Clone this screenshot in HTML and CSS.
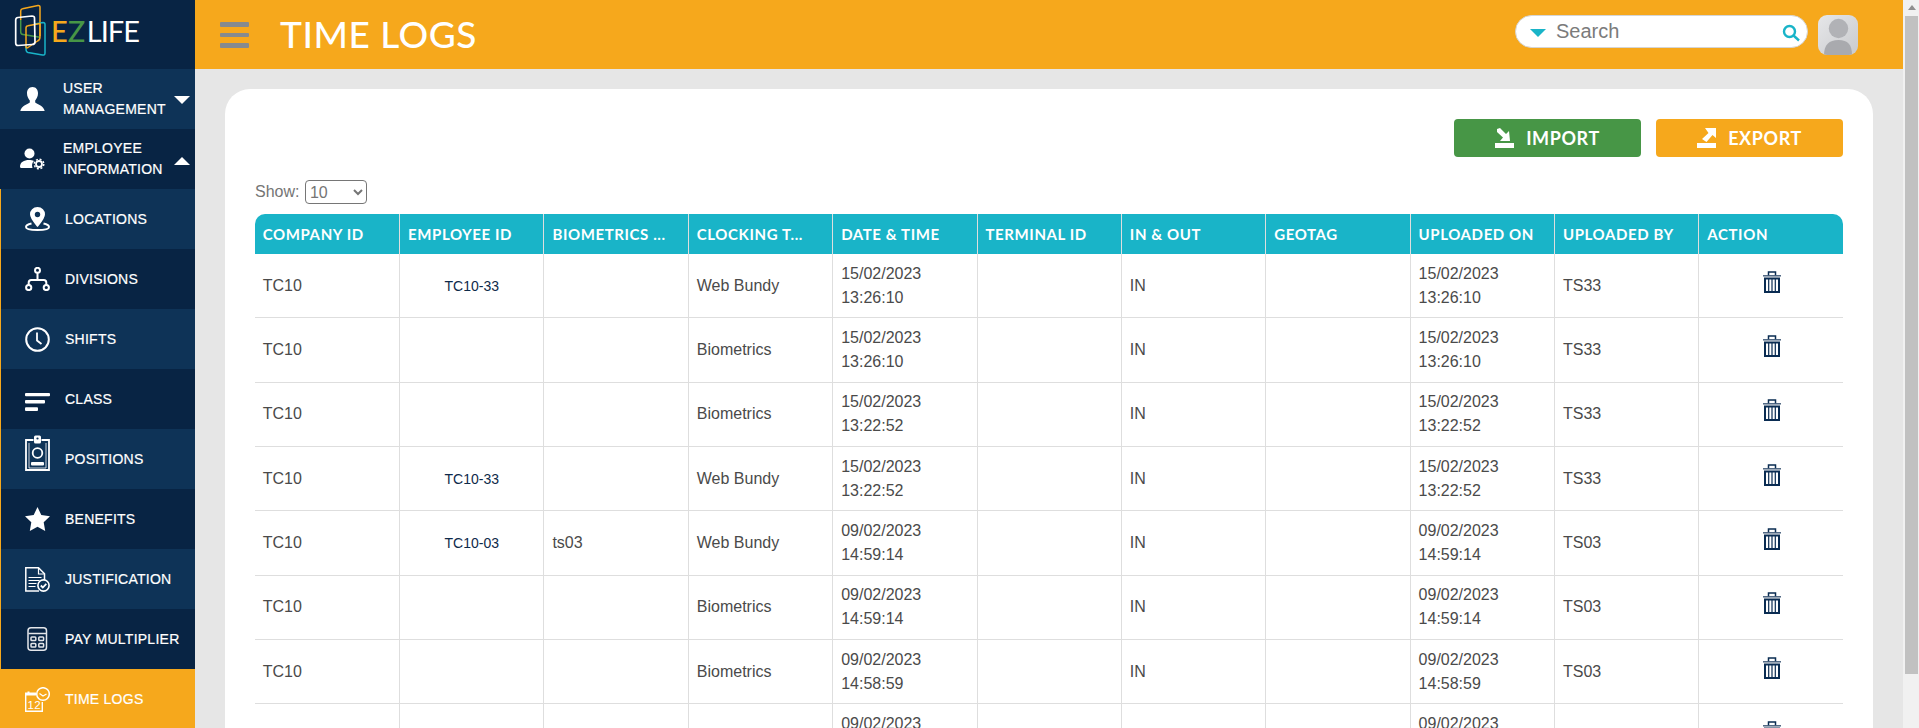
FILE: index.html
```html
<!DOCTYPE html>
<html lang="en">
<head>
<meta charset="utf-8">
<title>Time Logs</title>
<link rel="stylesheet" href="styles.css">
</head>
<body>
<div class="app">
  <aside class="sidebar">
    <div class="brand">
      <svg class="brand-mark" width="50" height="69" viewBox="0 0 50 69" fill="none" stroke-width="1.500" stroke-linejoin="round">
        <path d="M20.700 20V11Q20.700 9 22.500 8.700L38 5.500Q40 5.300 40 7.300V36" stroke="#f6a81c"/>
        <path d="M20.700 20V32Q20.700 34.300 23 34.600L40 37.300" stroke="#479646"/>
        <path d="M35 24L43 22.500Q45 22.500 45 24.500V53Q45 55.500 42.500 55L28 52.500Q26 52 26 49V46" stroke="#19b4c8"/>
        <path d="M26 47V28Q26 26 28 25.700L40 23.500V37Q40 40 37.500 41L28 47.500Q26 48.500 26 47Z" stroke="#f6a81c"/>
        <path d="M18 17.500L32 16Q34.500 16 34.500 18L35 42Q35 44.500 32 44.500L18 45.500Q15.700 45.500 15.700 43V20Q15.700 17.800 18 17.500Z" stroke="#fff" stroke-width="1.700"/>
      </svg>
      <div class="brand-name"><span class="brand-e">E</span><span class="brand-z">Z</span><span class="brand-life">LIFE</span></div>
    </div>
    <nav class="nav">
      <a class="nav-top nav-light">
        <svg class="top-icon" width="25" height="24" viewBox="0 0 25 24" fill="#fff"><path d="M12.500 0C8.800 0 7 3 7 6.200c0 3 1.300 5.600 2.800 7.200v2.200C7 17.500 1.500 19 .3 24h24.400c-1.200-5-6.700-6.500-9.500-8.400v-2.200C16.700 11.800 18 9.200 18 6.200 18 3 16.200 0 12.500 0z"/></svg>
        <span class="top-label">USER MANAGEMENT</span>
        <span class="caret-down"></span>
      </a>
      <a class="nav-top nav-dark">
        <svg class="top-icon" width="25" height="22" viewBox="0 0 25 22" fill="#fff"><circle cx="9.500" cy="5.500" r="5"/><path d="M0 19c0-5 4-7 9-7 2 0 3.500.3 5 1-1.800 1.500-2.500 4-1.500 7H2c-1.300 0-2-.5-2-1z"/><g fill="none" stroke="#fff"><circle cx="19" cy="16" r="3" stroke-width="1.800"/><circle cx="19" cy="16" r="4.800" stroke-width="1.400" stroke-dasharray="2 1.770"/></g></svg>
        <span class="top-label">EMPLOYEE INFORMATION</span>
        <span class="caret-up"></span>
      </a>
      <a class="nav-item nav-light">
        <svg class="item-icon" width="25" height="24" viewBox="0 0 25 24" fill="none" stroke="#fff" stroke-width="2"><path d="M12.500 1C8.500 1 6 4 6 7.300c0 3.700 3.500 7.500 6.500 11.200 3-3.700 6.500-7.500 6.500-11.200C19 4 16.500 1 12.500 1z" fill="#fff"/><circle cx="12.500" cy="7.500" r="2.700" fill="#0e3357" stroke="none"/><path d="M6.500 16.500C3 17.300 1 18.500 1 20c0 2 5 3 11.500 3S24 22 24 20c0-1.500-2-2.700-5.500-3.500"/></svg>
        <span>LOCATIONS</span>
      </a>
      <a class="nav-item nav-dark">
        <svg class="item-icon" width="25" height="24" viewBox="0 0 25 24" fill="none" stroke="#fff" stroke-width="2"><circle cx="12.500" cy="3.300" r="2.500"/><circle cx="3.700" cy="20.500" r="2.600"/><circle cx="21.300" cy="20.500" r="2.600"/><path d="M12.500 6v7M3.700 18v-2.500q0-2.500 2.500-2.500h12.600q2.500 0 2.500 2.500V18"/></svg>
        <span>DIVISIONS</span>
      </a>
      <a class="nav-item nav-light">
        <svg class="item-icon" width="25" height="25" viewBox="0 0 25 25" fill="none" stroke="#fff" stroke-width="2"><circle cx="12.500" cy="12.500" r="11.300"/><path d="M12 5.500v8l4.500 3.500" stroke-width="1.800"/></svg>
        <span>SHIFTS</span>
      </a>
      <a class="nav-item nav-dark">
        <svg class="item-icon icon-class" width="25" height="18" viewBox="0 0 25 18" fill="#fff"><rect width="25" height="3.200" rx="1"/><rect y="7" width="20" height="3.400" rx="1"/><rect y="14.200" width="13" height="3.800" rx="1"/></svg>
        <span>CLASS</span>
      </a>
      <a class="nav-item nav-light">
        <svg class="item-icon icon-badge" width="25" height="36" viewBox="0 0 25 36" fill="none" stroke="#fff"><path d="M8.500 5H1v30h23V5h-7.500" stroke-width="1.800"/><rect x="9" y=".5" width="7" height="8" rx="1.500" fill="#fff" stroke="none"/><circle cx="12.500" cy="3.500" r="1.100" fill="#0e3357" stroke="none"/><path d="M4 8v25h17V8" stroke-width=".8"/><circle cx="12.500" cy="18" r="4.800" stroke-width="1.800"/><rect x="6" y="27" width="13" height="3.500" rx="1" fill="#fff" stroke="none"/></svg>
        <span>POSITIONS</span>
      </a>
      <a class="nav-item nav-dark">
        <svg class="item-icon" width="25" height="24" viewBox="0 0 25 24" fill="#fff"><path d="M12.500 0l3.800 8 8.700 1.200-6.300 6 1.500 8.800-7.700-4.200L4.800 24l1.500-8.800L0 9.200 8.700 8z"/></svg>
        <span>BENEFITS</span>
      </a>
      <a class="nav-item nav-light">
        <svg class="item-icon" width="25" height="25" viewBox="0 0 25 25" fill="none" stroke="#fff"><path d="M14 24H.8V.8h12.700l6 6V13" stroke-width="1.500"/><path d="M13.500 1v6h6" stroke-width="1.200"/><path d="M3.500 10.500h13M3.500 13.500h11M3.500 16.500h8M3.500 19.500h7" stroke-width="1.200"/><circle cx="18.500" cy="18.500" r="5.600" stroke-width="1.600"/><path d="M15.800 18.500l2 2 3.500-3.700" stroke-width="1.800"/></svg>
        <span>JUSTIFICATION</span>
      </a>
      <a class="nav-item nav-dark">
        <svg class="item-icon" width="25" height="24" viewBox="0 0 25 24" fill="none" stroke="#e4e6ea" stroke-width="1.500"><rect x="3" y=".8" width="18.500" height="22.400" rx="3"/><path d="M3.500 6.500h18"/><rect x="6" y="10" width="4.800" height="3.600" rx=".8"/><rect x="13.800" y="10" width="4.800" height="3.600" rx=".8"/><rect x="6" y="16.500" width="4.800" height="3.600" rx=".8"/><rect x="13.800" y="16.500" width="4.800" height="3.600" rx=".8"/></svg>
        <span>PAY MULTIPLIER</span>
      </a>
      <a class="nav-item nav-active">
        <svg class="item-icon" width="25" height="25" viewBox="0 0 25 25" fill="none" stroke="#fff"><path d="M0 5.500h11v3H0z" fill="#fff" stroke="none"/><rect x="2.500" y="4.500" width="2" height="3" fill="#fff" stroke="none"/><path d="M.7 6v18.300h16.600V15" stroke-width="1.400"/><text x="2.500" y="22" class="cal-day">12</text><circle cx="18" cy="7" r="6.300" fill="#f6a81c" stroke-width="1.500"/><path d="M14.500 6.500l3.500 2.500 3.500-2" stroke-width="1.300"/></svg>
        <span>TIME LOGS</span>
      </a>
    </nav>
  </aside>

  <div class="main">
    <header class="topbar">
      <div class="burger"><i></i><i></i><i></i></div>
      <h1 class="page-title">TIME LOGS</h1>
      <div class="topbar-right">
        <div class="search">
          <span class="search-caret"></span>
          <span class="search-text">Search</span>
          <svg class="search-icon" width="18" height="18" viewBox="0 0 18 18" fill="none" stroke="#19b4c8"><circle cx="7.500" cy="7.500" r="5.500" stroke-width="2.400"/><path d="M11.500 11.500l5.500 5" stroke-width="2.400"/></svg>
        </div>
        <div class="avatar">
          <svg width="40" height="40" viewBox="0 0 40 40"><circle cx="20.500" cy="13.500" r="9.700" fill="#b1b2b6"/><path d="M6 40c0-10 5-15 14.500-15S34 30 34 40z" fill="#a9aaae"/></svg>
        </div>
      </div>
    </header>

    <main class="content">
      <section class="card">
        <div class="actions">
          <button class="btn btn-import">
            <svg width="19" height="20" viewBox="0 0 19 20" fill="#fff"><rect y="15" width="19" height="5"/><path d="M2 1l3-1 6 6 3-3 1 10H5l3-3.500L2 4z"/></svg>
            IMPORT
          </button>
          <button class="btn btn-export">
            <svg width="19" height="20" viewBox="0 0 19 20" fill="#fff"><rect y="15" width="19" height="5"/><path d="M8 0h11v10l-3.500-3-6 7-4.500-3 6.500-6z"/></svg>
            EXPORT
          </button>
        </div>
        <div class="show">
          <label for="page-size">Show:</label>
          <select id="page-size" class="show-select"><option>10</option></select>
        </div>
        <table class="logs">
          <thead>
            <tr>
              <th>COMPANY ID</th><th>EMPLOYEE ID</th><th>BIOMETRICS ...</th><th>CLOCKING T...</th><th>DATE &amp; TIME</th><th>TERMINAL ID</th><th>IN &amp; OUT</th><th>GEOTAG</th><th>UPLOADED ON</th><th>UPLOADED BY</th><th>ACTION</th>
            </tr>
          </thead>
          <tbody>
            <tr><td>TC10</td><td class="emp">TC10-33</td><td></td><td>Web Bundy</td><td>15/02/2023<br>13:26:10</td><td></td><td>IN</td><td></td><td>15/02/2023<br>13:26:10</td><td>TS33</td><td class="act"><svg class="trash" width="18" height="22" viewBox="0 0 18 22"><use href="#trash"/></svg></td></tr>
            <tr><td>TC10</td><td class="emp"></td><td></td><td>Biometrics</td><td>15/02/2023<br>13:26:10</td><td></td><td>IN</td><td></td><td>15/02/2023<br>13:26:10</td><td>TS33</td><td class="act"><svg class="trash" width="18" height="22" viewBox="0 0 18 22"><use href="#trash"/></svg></td></tr>
            <tr><td>TC10</td><td class="emp"></td><td></td><td>Biometrics</td><td>15/02/2023<br>13:22:52</td><td></td><td>IN</td><td></td><td>15/02/2023<br>13:22:52</td><td>TS33</td><td class="act"><svg class="trash" width="18" height="22" viewBox="0 0 18 22"><use href="#trash"/></svg></td></tr>
            <tr><td>TC10</td><td class="emp">TC10-33</td><td></td><td>Web Bundy</td><td>15/02/2023<br>13:22:52</td><td></td><td>IN</td><td></td><td>15/02/2023<br>13:22:52</td><td>TS33</td><td class="act"><svg class="trash" width="18" height="22" viewBox="0 0 18 22"><use href="#trash"/></svg></td></tr>
            <tr><td>TC10</td><td class="emp">TC10-03</td><td>ts03</td><td>Web Bundy</td><td>09/02/2023<br>14:59:14</td><td></td><td>IN</td><td></td><td>09/02/2023<br>14:59:14</td><td>TS03</td><td class="act"><svg class="trash" width="18" height="22" viewBox="0 0 18 22"><use href="#trash"/></svg></td></tr>
            <tr><td>TC10</td><td class="emp"></td><td></td><td>Biometrics</td><td>09/02/2023<br>14:59:14</td><td></td><td>IN</td><td></td><td>09/02/2023<br>14:59:14</td><td>TS03</td><td class="act"><svg class="trash" width="18" height="22" viewBox="0 0 18 22"><use href="#trash"/></svg></td></tr>
            <tr><td>TC10</td><td class="emp"></td><td></td><td>Biometrics</td><td>09/02/2023<br>14:58:59</td><td></td><td>IN</td><td></td><td>09/02/2023<br>14:58:59</td><td>TS03</td><td class="act"><svg class="trash" width="18" height="22" viewBox="0 0 18 22"><use href="#trash"/></svg></td></tr>
            <tr><td>TC10</td><td class="emp">TC10-03</td><td></td><td>Web Bundy</td><td>09/02/2023<br>14:58:59</td><td></td><td>IN</td><td></td><td>09/02/2023<br>14:58:59</td><td>TS03</td><td class="act"><svg class="trash" width="18" height="22" viewBox="0 0 18 22"><use href="#trash"/></svg></td></tr>
          </tbody>
        </table>
      </section>
    </main>
  </div>

  <div class="scrollbar">
    <div class="scroll-up"></div>
    <div class="scroll-thumb"></div>
  </div>
</div>

<svg class="defs" width="0" height="0">
  <defs>
    <symbol id="trash" viewBox="0 0 18 22">
      <path d="M5.500 4.300V1h7v3.300" fill="none" stroke="#0a2c52" stroke-width="1.500"/>
      <rect y="4.300" width="18" height="1.100" fill="#0a2c52"/>
      <rect x="2" y="7.500" width="14" height="13.500" fill="none" stroke="#0a2c52" stroke-width="2"/>
      <path d="M5.700 8v12.500M9 8v12.500M12.300 8v12.500" stroke="#0a2c52" stroke-width="1.200"/>
    </symbol>
  </defs>
</svg>
</body>
</html>
```

FILE: styles.css
```css
* { box-sizing: border-box; }
html, body { margin: 0; height: 100%; overflow: hidden; }
body { font-family: "Liberation Sans", Arial, sans-serif; color: #4a4a4a; background: #e6e6e6; }

.app { display: flex; height: 100vh; overflow: hidden; }

/* sidebar */
.sidebar { width: 195px; flex: none; background: #082444; display: flex; flex-direction: column; color: #fff; }
.brand { height: 69px; flex: none; display: flex; align-items: center; }
.brand-mark { flex: none; }
.brand-name { font-family: Lato, sans-serif; font-size: 29px; line-height: 1; margin-left: 1px; margin-top: -9px; display: flex; }
.brand-e { color: #f6a81c; font-weight: 500; }
.brand-z { color: #479646; font-weight: 500; margin-right: 2px; letter-spacing: -.5px; }
.brand-life { color: #fff; letter-spacing: -1px; }

.nav { display: flex; flex-direction: column; }
.nav a { display: flex; align-items: center; height: 60px; color: #fff; font-size: 14px; letter-spacing: .25px; -webkit-text-stroke: .2px #fff; }
.nav-light { background: #0e3357; }
.nav-dark { background: #082444; }
.nav-active { background: #f6a81c; }

.nav-top { padding: 0 5px 0 20px; }
.top-icon { flex: none; margin-right: 18px; }
.top-label { width: 105px; line-height: 21px; flex: none; }
.caret-down, .caret-up { width: 0; height: 0; margin-left: auto; border-left: 8px solid transparent; border-right: 8px solid transparent; }
.caret-down { border-top: 8px solid #fff; margin-top: 2px; }
.caret-up { border-bottom: 8px solid #fff; margin-top: 4px; }

.nav-item { border-left: 1px solid #f6a81c; padding-left: 24px; gap: 15px; }
.nav-active.nav-item { border-left: 0; padding-left: 25px; }
.item-icon { flex: none; }
.icon-class { margin-top: 6px; }
.icon-badge { margin-bottom: 12px; }
.cal-day { font: 11.5px "Liberation Sans", Arial, sans-serif; fill: #fff; stroke: none; }

/* main */
.main { flex: 1; min-width: 0; display: flex; flex-direction: column; }
.topbar { height: 69px; flex: none; background: #f6a81c; display: flex; align-items: center; padding-left: 25px; }
.burger { width: 29px; display: flex; flex-direction: column; gap: 5.500px; margin-top: 1px; }
.burger i { display: block; height: 4.800px; background: #858a8f; border-radius: 1px; }
.page-title { margin: 0 0 3px 31px; font: 500 37px/1 Lato, sans-serif; color: #fff; letter-spacing: .5px; }
.topbar-right { margin-left: auto; display: flex; align-items: center; padding-right: 45px; gap: 10px; }
.search { width: 293px; height: 33px; margin-bottom: 6px; background: #fff; border: 1px solid #d5d5d5; border-radius: 17px; display: flex; align-items: center; padding: 0 7px 0 14px; }
.search-caret { width: 0; height: 0; border-left: 8px solid transparent; border-right: 8px solid transparent; border-top: 8px solid #19b4c8; margin-top: 2px; }
.search-text { font-size: 20px; color: #7b7b7b; margin-left: 10px; }
.search-icon { margin-left: auto; margin-top: 3px; }
.avatar { width: 40px; height: 40px; border-radius: 9px; overflow: hidden; background: linear-gradient(135deg, #e6e7e9, #c9cacd); }
.avatar svg { display: block; }

.content { flex: 1; min-height: 0; padding: 20px 30px 0; background: #e6e6e6; }
.card { background: #fff; border-radius: 25px 25px 0 0; padding: 30px 30px 40px; }
.actions { display: flex; justify-content: flex-end; gap: 15px; }
.btn { width: 187px; height: 38px; border: 0; border-radius: 4px; display: flex; align-items: center; justify-content: center; gap: 12px; font: 700 18px/1 Lato, sans-serif; color: #fff; letter-spacing: .6px; }
.btn-import { background: #479646; }
.btn-export { background: #f6a81c; }

.show { display: flex; align-items: center; gap: 5.500px; height: 24px; margin-top: 23px; font-size: 16px; color: #757575; }
.show-select { width: 62px; height: 24px; font: 16px "Liberation Sans", Arial, sans-serif; color: #757575; background: #fff; border: 1px solid #767676; border-radius: 4px; }

.logs { width: 1588px; margin: 10px 0 0 -.3px; table-layout: fixed; border-collapse: separate; border-spacing: 0; font-size: 16px; line-height: 24px; }
.logs th { height: 40px; background: #19b4c8; color: #fff; font: 700 15px/1 Lato, sans-serif; letter-spacing: .6px; text-align: left; padding: 0 7px 0 8px; border-left: 1px solid #dedede; white-space: nowrap; overflow: hidden; }
.logs th:first-child { border-top-left-radius: 10px; border-left: 0; }
.logs th:last-child { border-top-right-radius: 10px; }
.logs td { padding: 7.660px 8px; border-left: 1px solid #dedede; border-bottom: 1px solid #dedede; vertical-align: middle; }
.logs td:first-child { border-left: 0; }
.logs td.emp { font-size: 14px; color: #0e2a4a; text-align: center; }
.logs td.act { text-align: center; padding-left: 10px; }
.trash { display: block; margin: -8px auto 0; }

/* scrollbar */
.scrollbar { width: 16px; flex: none; background: #f1f1f1; padding: 0 1px 0 2px; position: relative; }
.scroll-up { width: 0; height: 0; margin: 5px auto 0; border-left: 4px solid transparent; border-right: 4px solid transparent; border-bottom: 5px solid #8f8f8f; }
.scroll-thumb { height: 658px; margin-top: 6px; background: #c1c1c1; }

.defs { position: absolute; }
```
